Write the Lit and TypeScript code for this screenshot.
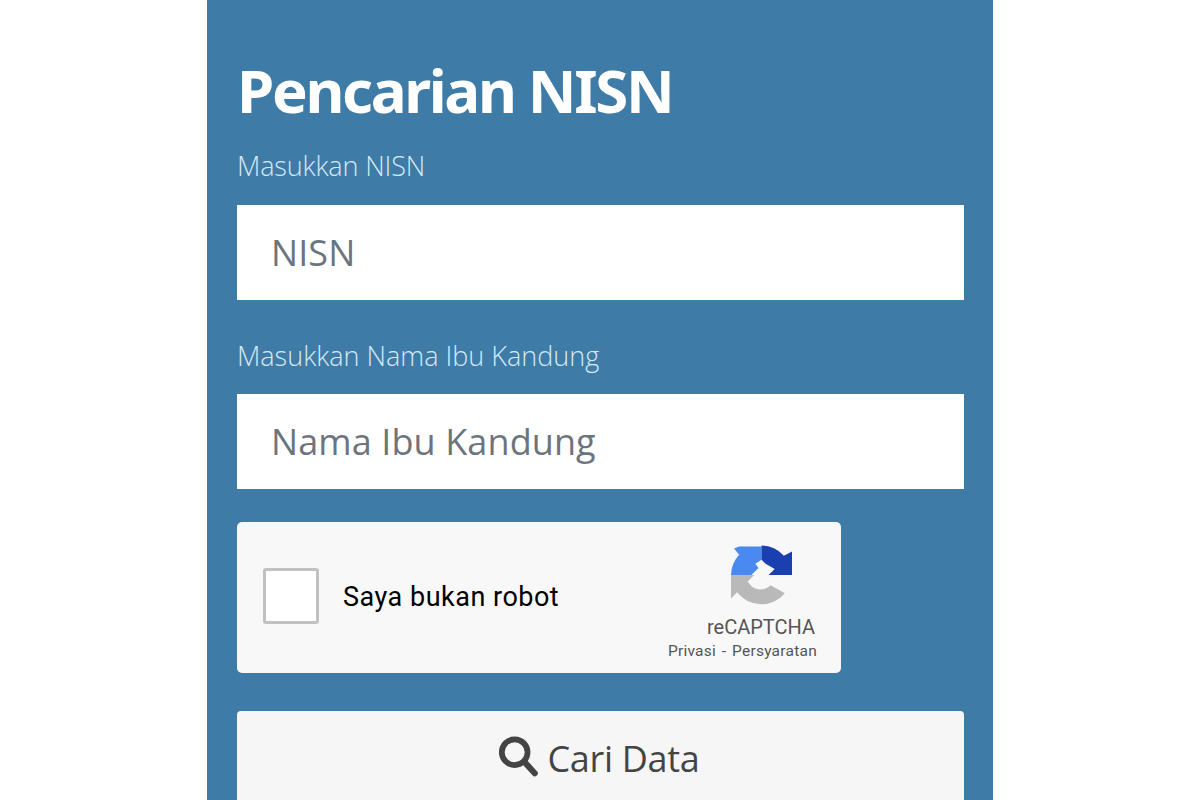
import { LitElement, html, css } from "lit";
import { customElement } from "lit/decorators.js";

@customElement("app-root")
export class AppRoot extends LitElement {
  static styles = css`
    :host { display: block; width: 1200px; height: 800px; background: #fff; overflow: hidden; font-family: "Open Sans", "Noto Sans", sans-serif; }
    .page { display: flex; justify-content: center; height: 800px; overflow: hidden; }
    .panel { width: 786px; box-sizing: border-box; height: 800px; padding: 54px 29px 0 30px; background: #3e7ba6; overflow: hidden; display: flex; flex-direction: column; flex: none; }
    h1 { margin: 0; font-size: 60px; line-height: 72px; font-weight: 700; color: #fff; letter-spacing: -2.35px; font-family: "Noto Sans", sans-serif; }
    label { display: block; font-size: 27px; line-height: 34px; font-weight: 300; color: #d5e9f5; letter-spacing: 0; white-space: nowrap; }
    .l1 { margin: 23px 0 22px; letter-spacing: -0.15px; }
    .l2 { margin: 39px 0 21px; }
    input { display: block; box-sizing: border-box; width: 100%; height: 95px; border: 0; border-radius: 0; padding: 0 34px; background: #fff; font: 400 36px "Open Sans", sans-serif; letter-spacing: 0.1px; color: #6c757d; outline: none; flex: none; }
    input::placeholder { color: #6c757d; opacity: 1; }
    .captcha { box-sizing: border-box; width: 604px; height: 151px; margin-top: 33px; background: #f8f8f8; border-radius: 5px; display: flex; align-items: center; padding: 0 24px 0 26px; flex: none; }
    .box { box-sizing: border-box; width: 56px; height: 56px; margin-bottom: 4px; background: #fff; border: 3px solid #c1c1c1; border-radius: 3px; flex: none; }
    .robot { margin: 0 0 2px 24px; font: 400 27px "Roboto", sans-serif; color: #000; flex: 1; letter-spacing: 0.5px; }
    .brand { display: flex; flex-direction: column; width: 150px; color: #555; padding-top: 10px; }
    .brand svg { width: 61px; height: 62px; display: block; align-self: flex-end; margin-right: 25px; }
    .name { font: 400 20px/24px "Roboto", sans-serif; margin-top: 9px; margin-right: 2px; color: #555; align-self: flex-end; }
    .terms { font: 400 15.5px/20px "Roboto", sans-serif; color: #555; white-space: nowrap; letter-spacing: 0.25px; word-spacing: 1.6px; margin-top: 2px; align-self: flex-end; }
    button { flex: none; box-sizing: border-box; width: 100%; height: 120px; margin-top: 38px; border: 0; border-radius: 4px 4px 0 0; background: #f6f6f6; color: #444; display: flex; justify-content: center; gap: 8px; padding: 21px 3px 0 0; font: 400 36px/54px "Open Sans", sans-serif; letter-spacing: -0.3px; }
    button svg { width: 41px; height: 42px; margin-top: 4px; flex: none; }
  `;
  render() {
    return html`<div class="page"><main class="panel">
      <h1>Pencarian NISN</h1>
      <label class="l1" for="a">Masukkan NISN</label>
      <input id="a" placeholder="NISN" />
      <label class="l2" for="b">Masukkan Nama Ibu Kandung</label>
      <input id="b" placeholder="Nama Ibu Kandung" />
      <div class="captcha">
        <div class="box"></div>
        <div class="robot">Saya bukan robot</div>
        <div class="brand">
          <svg viewBox="0 0 60 60">
            <path fill="#b9b9b9" d="M0 30H23L16.5 36.5A14 14 0 0 0 39 40L53 48A30 30 0 0 1 6 47L0 53Z"/>
            <path fill="#4a89f0" d="M0 30A30 30 0 0 1 8 10L3 4L8 2H30V15L24 19L27 23L20 30H0Z"/>
            <path fill="#1a3fb0" d="M30 1A30 30 0 0 1 52 11L60 7V30H37L43 24L34 19L30 15Z"/>
          </svg>
          <div class="name">reCAPTCHA</div>
          <div class="terms">Privasi - Persyaratan</div>
        </div>
      </div>
      <button type="button">
        <svg viewBox="0 0 42 44"><circle cx="17" cy="17" r="13.5" fill="none" stroke="#444" stroke-width="6"/><path d="M27 27L38 39" stroke="#444" stroke-width="6.5" stroke-linecap="round"/></svg>
        <span>Cari Data</span>
      </button>
    </main></div>`;
  }
}
